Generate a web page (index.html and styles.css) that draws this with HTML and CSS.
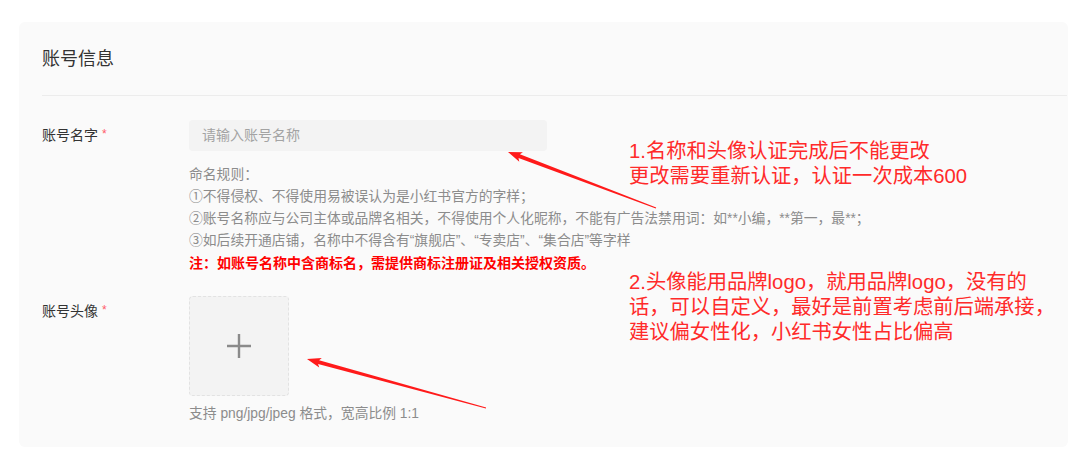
FILE: index.html
```html
<!DOCTYPE html>
<html lang="zh-CN">
<head>
<meta charset="utf-8">
<title>账号信息</title>
<link rel="stylesheet" href="styles.css">
</head>
<body>
<div class="page">
  <section class="card">
    <h2 class="card-title">账号信息</h2>
    <div class="divider"></div>

    <div class="form-row">
      <div class="label">账号名字<span class="req">*</span></div>
      <div class="field">
        <div class="input">请输入账号名称</div>
        <div class="rules">
          <p>命名规则：</p>
          <p>①不得侵权、不得使用易被误认为是小红书官方的字样；</p>
          <p>②账号名称应与公司主体或品牌名相关，不得使用个人化昵称，不能有广告法禁用词：如**小编，**第一，最**；</p>
          <p>③如后续开通店铺，名称中不得含有“旗舰店”、“专卖店”、“集合店”等字样</p>
          <p class="note">注：如账号名称中含商标名，需提供商标注册证及相关授权资质。</p>
        </div>
      </div>
    </div>

    <div class="form-row avatar-row">
      <div class="label tall">账号头像<span class="req">*</span></div>
      <div class="field">
        <div class="upload">
          <svg width="26" height="26" viewBox="0 0 26 26"><path d="M13 1v24M1 13h24" stroke="#8a8a8a" stroke-width="2.4" fill="none"/></svg>
        </div>
        <div class="caption">支持 png/jpg/jpeg 格式，宽高比例 1:1</div>
      </div>
    </div>
  </section>

  <div class="annot annot-1">
    <div class="annot-line">1.名称和头像认证完成后不能更改</div>
    <div class="annot-line">更改需要重新认证，认证一次成本600</div>
  </div>
  <div class="annot annot-2">
    <div class="annot-line">2.头像能用品牌logo，就用品牌logo，没有的</div>
    <div class="annot-line">话，可以自定义，最好是前置考虑前后端承接，</div>
    <div class="annot-line">建议偏女性化，小红书女性占比偏高</div>
  </div>

  <svg class="arrows" width="1080" height="459" viewBox="0 0 1080 459">
    <polygon fill="#ff1a1a" points="508,152 522.9,152.3 519.9,154.3 656.2,207.5 655.8,208.5 518.5,158.1 519.3,161.7"/>
    <polygon fill="#ff1a1a" points="307,359 321.8,357.9 319.1,360.3 486.1,407.5 485.9,408.5 318.1,364.1 319.2,367.5"/>
  </svg>
</div>
</body>
</html>
```

FILE: styles.css
```css
html, body {
  margin: 0;
  padding: 0;
  background: #ffffff;
}
body {
  font-family: "Liberation Sans", "Noto Sans CJK SC", sans-serif;
  width: 1080px;
  height: 459px;
  overflow: hidden;
}
.page {
  position: relative;
  width: 1080px;
  height: 459px;
  padding-top: 22px;
  box-sizing: border-box;
}
.card {
  margin-left: 19px;
  width: 1049px;
  height: 425px;
  box-sizing: border-box;
  background: #fafafa;
  border-radius: 6px;
  padding: 25px 1px 0 23px;
}
.card-title {
  margin: 0;
  font-size: 18px;
  line-height: 24px;
  font-weight: 400;
  color: #333;
}
.divider {
  margin-top: 24px;
  height: 1px;
  background: #ececec;
}
.form-row {
  display: flex;
  margin-top: 24px;
}
.avatar-row {
  margin-top: 22px;
}
.label {
  width: 147px;
  flex: none;
  font-size: 14px;
  line-height: 31px;
  color: #333;
}
.label.tall {
  line-height: 30px;
}
.req {
  color: #ff5a6a;
  font-size: 12px;
  margin-left: 4px;
  vertical-align: top;
  position: relative;
  top: -1px;
}
.field {
  display: flex;
  flex-direction: column;
}
.input {
  width: 358px;
  height: 31px;
  box-sizing: border-box;
  background: #f3f3f3;
  border-radius: 4px;
  padding-left: 13px;
  font-size: 14px;
  line-height: 31px;
  color: #a3a3a3;
}
.rules {
  margin-top: 13px;
  font-size: 13.8px;
  line-height: 22px;
  color: #8c8c8c;
}
.rules p {
  margin: 0;
  white-space: nowrap;
}
.rules .note {
  color: #ff0000;
  font-weight: 700;
  font-size: 14px;
}
.upload {
  width: 100px;
  height: 100px;
  box-sizing: border-box;
  background: #f3f3f3;
  border: 1px dashed #e2e2e2;
  border-radius: 4px;
  display: flex;
  align-items: center;
  justify-content: center;
}
.caption {
  margin-top: 8px;
  font-size: 13.8px;
  line-height: 20px;
  color: #8c8c8c;
}
.annot {
  position: absolute;
  left: 629px;
  font-size: 20.3px;
  color: #ff2a2a;
  white-space: nowrap;
}
.annot-line {
  height: 25px;
  line-height: 25px;
}
.annot-1 {
  top: 139px;
}
.annot-2 {
  top: 270px;
}
.arrows {
  position: absolute;
  left: 0;
  top: 0;
  pointer-events: none;
}
```
